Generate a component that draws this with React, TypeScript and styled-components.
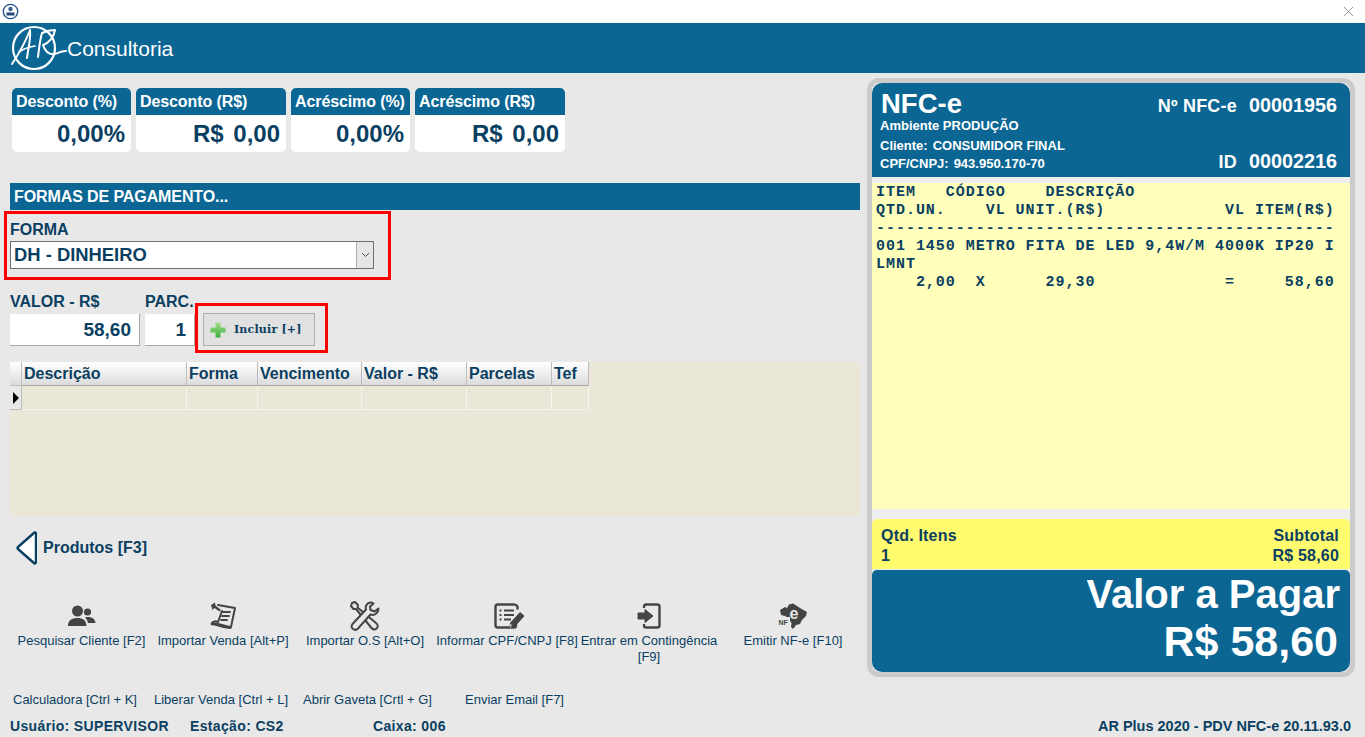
import React from "react";
import styled, { createGlobalStyle } from "styled-components";

const BLUE = "#0b6694";
const NAVY = "#0a3f62";
const ICON = "#444444";

const GlobalStyle = createGlobalStyle`
	html, body {
		margin: 0;
		padding: 0;
		background: #e8e8e8;
	}
	* {
		box-sizing: border-box;
	}
	body {
		font-family: "Liberation Sans", Arial, sans-serif;
		color: ${NAVY};
	}
`;

const Page = styled.div`
	width: 1365px;
	height: 737px;
	overflow: hidden;
	display: flex;
	flex-direction: column;
`;

// barra de titulo
const TitleBar = styled.div`
	height: 23px;
	background: #fff;
	display: flex;
	align-items: center;
	justify-content: space-between;
	padding: 0 11px 0 2px;
`;

const Banner = styled.div`
	height: 50px;
	background: ${BLUE};
	display: flex;
	align-items: center;
	padding: 0 0 0 11px;
`;

const BrandName = styled.span`
	color: #fff;
	font-size: 21px;
	margin: 1px 0 0 -2px;
`;

const Main = styled.div`
	flex: 1;
	display: flex;
	min-height: 0;
`;

const LeftColumn = styled.div`
	width: 867px;
	padding: 15px 7px 0 10px;
	display: flex;
	flex-direction: column;
`;

const Cards = styled.div`
	display: flex;
	gap: 5px;
	padding-left: 2px;
`;

const Card = styled.div<{ $width: number }>`
	width: ${(p) => p.$width}px;
	height: 64px;
	background: #fff;
	border-radius: 5px;
	overflow: hidden;
`;

const CardTitle = styled.div`
	height: 27px;
	background: ${BLUE};
	color: #fff;
	font-size: 16px;
	font-weight: bold;
	line-height: 27px;
	padding-left: 4px;
	letter-spacing: -0.1px;
	white-space: nowrap;
`;

const CardValue = styled.div`
	height: 37px;
	line-height: 38px;
	font-size: 24px;
	font-weight: bold;
	word-spacing: 3px;
	text-align: right;
	padding-right: 6px;
	white-space: nowrap;
`;

const SectionBar = styled.div`
	height: 27px;
	margin-top: 31px;
	background: ${BLUE};
	color: #fff;
	font-size: 16px;
	font-weight: bold;
	line-height: 28px;
	padding-left: 4px;
	letter-spacing: -0.1px;
`;

const Highlight = styled.div`
	border: 3px solid #f00;
`;

const FormaBox = styled(Highlight)`
	width: 387px;
	height: 69px;
	margin: 1px 0 0 -6px;
	padding: 7px 0 0 3px;
`;

const FieldLabel = styled.div`
	font-size: 16px;
	font-weight: bold;
	line-height: 18px;
	white-space: nowrap;
`;

const Select = styled.div`
	width: 364px;
	height: 28px;
	margin-top: 2px;
	background: #fff;
	border: 1px solid #6f6f6f;
	display: flex;
	align-items: center;
	justify-content: space-between;
	font-size: 18.4px;
	font-weight: bold;
	padding-left: 3px;
`;

const SelectArrow = styled.div`
	width: 17px;
	height: 26px;
	background: #e6e6e6;
	border-left: 1px solid #adadad;
	display: flex;
	align-items: center;
	justify-content: center;
`;

const ValuesRow = styled.div`
	display: flex;
	margin-top: 13px;
	height: 70px;
`;

const ValueField = styled.div<{ $width: number }>`
	width: ${(p) => p.$width}px;
	& + & {
		margin-left: 5px;
	}
`;

const ValueInput = styled.div`
	height: 32px;
	margin-top: 3px;
	background: #fff;
	border-right: 1px solid #a8a8a8;
	border-bottom: 1px solid #a8a8a8;
	text-align: right;
	font-size: 19px;
	font-weight: bold;
	line-height: 32px;
	padding-right: 8px;
`;

const IncluirBox = styled(Highlight)`
	width: 133px;
	height: 50px;
	margin-top: 10px;
	padding: 7px 0 0 5px;
`;

const IncluirButton = styled.div`
	width: 112px;
	height: 33px;
	background: #e1e1e1;
	border: 1px solid #adadad;
	display: flex;
	align-items: center;
	padding-left: 6px;
	gap: 8px;
	font-family: "DejaVu Serif", "Liberation Serif", serif;
	font-size: 11px;
	font-weight: bold;
	letter-spacing: 0.2px;
`;

const Grid = styled.div`
	height: 154px;
	margin-top: -1px;
	background: #ebe7d8;
`;

const GridRow = styled.div`
	display: flex;
	height: 24px;
`;

const HeaderCell = styled.div<{ $width: number }>`
	width: ${(p) => p.$width}px;
	background: linear-gradient(#ffffff, #dcdcdc);
	border-right: 1px solid #bdbdbd;
	border-bottom: 1px solid #a9a9a9;
	font-size: 16px;
	font-weight: bold;
	line-height: 23px;
	padding-left: 2px;
	white-space: nowrap;
`;

const BodyCell = styled.div<{ $width: number }>`
	width: ${(p) => p.$width}px;
	border-right: 1px solid #f5f3ea;
	border-bottom: 1px solid #f5f3ea;
`;

const RowMarker = styled.div`
	width: 12px;
	background: #e8e8e8;
	border-right: 1px solid #bdbdbd;
	border-bottom: 1px solid #bdbdbd;
	display: flex;
	align-items: center;
	padding-left: 3px;
`;

const CornerCell = styled(RowMarker)`
	background: linear-gradient(#ffffff, #dcdcdc);
`;

const BackLink = styled.div`
	display: flex;
	align-items: center;
	gap: 6px;
	margin: 15px 0 0 6px;
	height: 34px;
	font-size: 16px;
	font-weight: bold;
`;

const Actions = styled.div`
	display: flex;
	margin-top: 35px;
	height: 70px;
`;

const Action = styled.div<{ $width: number }>`
	flex: none;
	width: ${(p) => p.$width + 10}px;
	margin: 0 -5px;
	display: flex;
	flex-direction: column;
	align-items: center;
	text-align: center;
	font-size: 13px;
	line-height: 16px;
`;

const ActionIcon = styled.div`
	height: 32px;
	margin-bottom: 1px;
	display: flex;
	align-items: center;
	justify-content: center;
`;

const Links = styled.div`
	display: flex;
	height: 16px;
	margin-top: 22px;
	padding-left: 3px;
	font-size: 13px;
	line-height: 16px;
`;

const LinkItem = styled.span<{ $width: number }>`
	width: ${(p) => p.$width}px;
	white-space: nowrap;
`;

const StatusBar = styled.div`
	display: flex;
	margin-top: 10px;
	font-size: 14px;
	font-weight: bold;
	line-height: 16px;
	letter-spacing: 0.35px;
`;

const StatusItem = styled.span<{ $width: number }>`
	width: ${(p) => p.$width}px;
	white-space: nowrap;
`;

const RightColumn = styled.div`
	width: 498px;
	padding: 5px 10px 0 0;
	display: flex;
	flex-direction: column;
`;

const ReceiptFrame = styled.div`
	height: 599px;
	border: 5px solid #cbcbcb;
	border-radius: 12px;
	background: #eeeeee;
	display: flex;
	flex-direction: column;
`;

const ReceiptHeader = styled.div`
	height: 94px;
	background: ${BLUE};
	border-radius: 10px 10px 0 0;
	color: #fff;
	display: flex;
	justify-content: space-between;
	padding: 6px 13px 0 8px;
	font-weight: bold;
`;

const HeaderInfo = styled.div`
	display: flex;
	flex-direction: column;
`;

const NfceTitle = styled.div`
	font-size: 27.5px;
	line-height: 29px;
	padding-left: 1px;
`;

const InfoLine = styled.div<{ $mt: number }>`
	font-size: 13px;
	line-height: 15px;
	margin-top: ${(p) => p.$mt}px;
	white-space: nowrap;
	span {
		margin-left: 5px;
	}
`;

const HeaderNumbers = styled.div`
	display: flex;
	flex-direction: column;
	justify-content: space-between;
	align-items: flex-end;
	padding: 5px 0 3px;
`;

const NumberLine = styled.div`
	font-size: 18px;
	line-height: 23px;
	letter-spacing: 0.2px;
	white-space: nowrap;
	span {
		font-size: 19.8px;
		letter-spacing: 0;
		margin-left: 12px;
	}
`;

const ReceiptPaper = styled.pre`
	height: 326px;
	margin: 6px 0 0;
	background: #ffffbb;
	padding: 1px 0 0 4px;
	font-family: "Liberation Mono", "Courier New", monospace;
	font-size: 15px;
	font-weight: bold;
	letter-spacing: 0.97px;
	line-height: 18px;
	color: ${NAVY};
	overflow: hidden;
`;

const SubtotalBand = styled.div`
	height: 50px;
	margin-top: 10px;
	background: #fffb6e;
	border-radius: 5px 5px 0 0;
	display: flex;
	justify-content: space-between;
	padding: 7px 11px 0 9px;
	font-size: 16px;
	line-height: 20px;
	font-weight: bold;
	letter-spacing: 0.2px;
`;

const SubtotalRight = styled.div`
	text-align: right;
`;

const PayBox = styled.div`
	flex: 1;
	margin-top: 1px;
	background: ${BLUE};
	border-radius: 5px 5px 10px 10px;
	color: #fff;
	font-weight: bold;
	text-align: right;
	padding: 2px 10px 0 0;
`;

const PayLabel = styled.div`
	font-size: 40px;
	line-height: 44px;
`;

const PayValue = styled.div`
	font-size: 43px;
	line-height: 50px;
	padding-right: 2px;
`;

const Version = styled.div`
	margin-top: 41px;
	text-align: right;
	font-size: 14.5px;
	font-weight: bold;
	line-height: 16px;
	padding-right: 4px;
	white-space: nowrap;
`;

const AppIcon = () => (
	<svg width="17" height="17" viewBox="0 0 17 17">
		<circle cx="8.5" cy="8.5" r="7.2" fill="#fff" stroke="#1f4f8a" strokeWidth="1.3" />
		<circle cx="8.5" cy="6" r="2.2" fill="#3a5f95" />
		<path d="M4.5 12.5 V9.5 H12.5 V12.5 Z" fill="#27477a" />
	</svg>
);

const CloseIcon = () => (
	<svg width="11" height="11" viewBox="0 0 11 11">
		<path d="M1 1 L10 10 M10 1 L1 10" stroke="#9a9a9a" strokeWidth="1" />
	</svg>
);

const Logo = () => (
	<svg width="58" height="46" viewBox="0 0 58 46" fill="none" stroke="#fff" strokeLinecap="round" strokeLinejoin="round">
		<circle cx="23" cy="23" r="21" strokeWidth="2.2" />
		<path d="M1 39 C7 30 14 18 19 5 C20 14 17 24 16 33" strokeWidth="2" />
		<path d="M8 27 C12 24 18 22 24 21" strokeWidth="1.6" />
		<path d="M27 32 C28 24 29 14 31 8 C35 6 40 5 44 5 C43 12 38 18 32 20 C34 26 38 30 44 29 C47 28 50 26 55 26" strokeWidth="2" />
	</svg>
);

const SelectChevron = () => (
	<svg width="9" height="6" viewBox="0 0 9 6" fill="none">
		<path d="M1 1 L4.5 4.5 L8 1" stroke="#555" strokeWidth="1" />
	</svg>
);

const PlusIcon = () => (
	<svg width="16" height="16" viewBox="0 0 16 16">
		<defs>
			<linearGradient id="plusFill" x1="0" y1="0" x2="0" y2="1">
				<stop offset="0" stopColor="#9fe08c" />
				<stop offset="1" stopColor="#3fae3a" />
			</linearGradient>
		</defs>
		<path d="M5.5 0.5 H10.5 V5.5 H15.5 V10.5 H10.5 V15.5 H5.5 V10.5 H0.5 V5.5 H5.5 Z" fill="url(#plusFill)" />
	</svg>
);

const MarkerArrow = () => (
	<svg width="6" height="12" viewBox="0 0 6 12">
		<path d="M0 0 L6 6 L0 12 Z" fill="#000" />
	</svg>
);

const BackArrow = () => (
	<svg width="21" height="34" viewBox="0 0 21 34">
		<path d="M18.5 1.5 Q20 1.5 20 3 V31 Q20 32.5 18.5 32.5 L2 18 Q1 17 2 16 Z" fill="#fff" stroke={NAVY} strokeWidth="2.4" strokeLinejoin="round" />
	</svg>
);

const ClientsIcon = () => (
	<svg width="28" height="22" viewBox="0 0 28 22" fill={ICON}>
		<circle cx="9.5" cy="6" r="5.5" />
		<circle cx="19.5" cy="7" r="3.6" />
		<path d="M0 21 C0 15 4 13 9.5 13 C15 13 18 15 18.5 21 Z" />
		<path d="M17 12.5 C22 11 27 13 27.5 18 H20 C19.6 15.5 18.6 14 17 12.5 Z" />
	</svg>
);

const ImportIcon = () => (
	<svg width="28" height="28" viewBox="0 0 28 28" fill="none" stroke={ICON} strokeLinecap="round">
		<path d="M9 3 L26 6 L22 25 C18 26 10 24 3 21 C4 19 7 19 9 20 L13 9" strokeWidth="2" strokeLinejoin="round" />
		<path d="M14 10 H21 M13 14 H20 M12 18 H18" strokeWidth="1.8" />
		<path d="M2 3 L6 0.5 L6.5 3.5 L12 8 L10.5 9.5 L5.5 6 L3.5 8 Z" fill={ICON} stroke="none" />
		<path d="M3 22 C7 21 13 24 21 25.5" strokeWidth="3" />
	</svg>
);

const ToolsIcon = () => (
	<svg width="30" height="30" viewBox="0 0 30 30" fill="none" stroke={ICON} strokeWidth="2" strokeLinejoin="round" strokeLinecap="round">
		<path d="M2 2 L5 1 L8 4 L7.5 6.5 L26 22 C28.5 24 28 26 26.5 27.5 C25 29 23 28.5 21.5 27 L6 8 L3.5 8 L1 5 Z" />
		<path d="M20 1.5 C17 2 15 5 16 8.5 L2.5 23 C1 25 1.5 27 3 28 C4.5 29.2 6.5 29 8 27.5 L20.5 13.5 C24.5 15 28.5 12 28.5 7.5 L24.5 10.5 L20.5 9 L20 5.5 L23.5 2.5 C22.5 1.8 21 1.3 20 1.5 Z" fill="#e8e8e8" />
	</svg>
);

const FormIcon = () => (
	<svg width="35" height="26" viewBox="-4 0 35 26" fill="none" stroke={ICON}>
		<path d="M22 20 V22.5 Q22 24.5 20 24.5 H3.5 Q1.5 24.5 1.5 22.5 V3.5 Q1.5 1.5 3.5 1.5 H20 Q22.5 1.5 23.5 3.5 V6.5" strokeWidth="2.4" />
		<path d="M5.5 7.5 H7.5 M5.5 12 H7.5 M5.5 16.5 H7.5" strokeWidth="2" />
		<path d="M10 7.5 H20 M10 12 H20 M10 16.5 H17" strokeWidth="2" />
		<path d="M16 25 L16.5 20 L26 9.5 L30 13 L20.5 23.5 Z" fill={ICON} strokeWidth="1" strokeLinejoin="round" />
		<path d="M16.6 24.6 L17 21" stroke="#e8e8e8" strokeWidth="1" />
	</svg>
);

const ContingencyIcon = () => (
	<svg width="24" height="26" viewBox="0 0 24 26" fill="none" stroke={ICON}>
		<path d="M7 5 V3.5 Q7 1.5 9 1.5 H20 Q22.5 1.5 22.5 3.5 V22.5 Q22.5 24.5 20 24.5 H9 Q7 24.5 7 22.5 V21" strokeWidth="2.4" />
		<path d="M1 10 H8 V6.5 L16 13 L8 19.5 V16 H1 Z" fill={ICON} stroke={ICON} strokeLinejoin="round" />
	</svg>
);

const BrazilIcon = () => (
	<svg width="30" height="26" viewBox="0 0 30 26">
		<path d="M2 7 L7 4 L9 5 L11 1.5 L15 0.5 L19 3 L22 5 L29 9 L28 13 L24 17 L22 21 L18 22 L15 26 L13 24 L13.5 20 L10 15 L7 13 L3 12 Z" fill={ICON} />
		<text x="16" y="16" fontFamily="Liberation Sans" fontWeight="bold" fontSize="16" fill="#e8e8e8" textAnchor="middle">e</text>
		<rect x="0" y="14" width="12" height="9" fill="#e8e8e8" />
		<text x="0.5" y="22" fontFamily="Liberation Sans" fontWeight="bold" fontSize="7" fill={ICON}>NF</text>
	</svg>
);

const gridColumns = [
	{ label: "Descrição", width: 165 },
	{ label: "Forma", width: 71 },
	{ label: "Vencimento", width: 104 },
	{ label: "Valor - R$", width: 105 },
	{ label: "Parcelas", width: 85 },
	{ label: "Tef", width: 37 },
];

const cards = [
	{ title: "Desconto (%)", value: "0,00%", width: 119 },
	{ title: "Desconto (R$)", value: "R$ 0,00", width: 150 },
	{ title: "Acréscimo (%)", value: "0,00%", width: 119 },
	{ title: "Acréscimo (R$)", value: "R$ 0,00", width: 150 },
];

const actions = [
	{ label: "Pesquisar Cliente [F2]", width: 143, icon: <ClientsIcon /> },
	{ label: "Importar Venda [Alt+P]", width: 140, icon: <ImportIcon /> },
	{ label: "Importar O.S [Alt+O]", width: 144, icon: <ToolsIcon /> },
	{ label: "Informar CPF/CNPJ [F8]", width: 140, icon: <FormIcon /> },
	{ label: "Entrar em Contingência [F9]", width: 144, icon: <ContingencyIcon /> },
	{ label: "Emitir NF-e [F10]", width: 144, icon: <BrazilIcon /> },
];

const receiptText = `ITEM   CÓDIGO    DESCRIÇÃO
QTD.UN.    VL UNIT.(R$)            VL ITEM(R$)
----------------------------------------------
001 1450 METRO FITA DE LED 9,4W/M 4000K IP20 I
LMNT
    2,00  X      29,30             =     58,60`;

const App = () => {
	return (
		<Page>
			<GlobalStyle />
			<TitleBar>
				<AppIcon />
				<CloseIcon />
			</TitleBar>
			<Banner>
				<Logo />
				<BrandName>Consultoria</BrandName>
			</Banner>
			<Main>
				<LeftColumn>
					<Cards>
						{cards.map((card) => (
							<Card key={card.title} $width={card.width}>
								<CardTitle>{card.title}</CardTitle>
								<CardValue>{card.value}</CardValue>
							</Card>
						))}
					</Cards>
					<SectionBar>FORMAS DE PAGAMENTO...</SectionBar>
					<FormaBox>
						<FieldLabel>FORMA</FieldLabel>
						<Select>
							DH - DINHEIRO
							<SelectArrow>
								<SelectChevron />
							</SelectArrow>
						</Select>
					</FormaBox>
					<ValuesRow>
						<ValueField $width={130}>
							<FieldLabel>VALOR - R$</FieldLabel>
							<ValueInput>58,60</ValueInput>
						</ValueField>
						<ValueField $width={50}>
							<FieldLabel>PARC.</FieldLabel>
							<ValueInput>1</ValueInput>
						</ValueField>
						<IncluirBox>
							<IncluirButton>
								<PlusIcon />
								Incluir [+]
							</IncluirButton>
						</IncluirBox>
					</ValuesRow>
					<Grid>
						<GridRow>
							<CornerCell />
							{gridColumns.map((col) => (
								<HeaderCell key={col.label} $width={col.width}>
									{col.label}
								</HeaderCell>
							))}
						</GridRow>
						<GridRow>
							<RowMarker>
								<MarkerArrow />
							</RowMarker>
							{gridColumns.map((col) => (
								<BodyCell key={col.label} $width={col.width} />
							))}
						</GridRow>
					</Grid>
					<BackLink>
						<BackArrow />
						Produtos [F3]
					</BackLink>
					<Actions>
						{actions.map((action) => (
							<Action key={action.label} $width={action.width}>
								<ActionIcon>{action.icon}</ActionIcon>
								{action.label}
							</Action>
						))}
					</Actions>
					<Links>
						<LinkItem $width={141}>Calculadora [Ctrl + K]</LinkItem>
						<LinkItem $width={149}>Liberar Venda [Ctrl + L]</LinkItem>
						<LinkItem $width={162}>Abrir Gaveta [Crtl + G]</LinkItem>
						<LinkItem $width={110}>Enviar Email [F7]</LinkItem>
					</Links>
					<StatusBar>
						<StatusItem $width={180}>Usuário: SUPERVISOR</StatusItem>
						<StatusItem $width={183}>Estação: CS2</StatusItem>
						<StatusItem $width={90}>Caixa: 006</StatusItem>
					</StatusBar>
				</LeftColumn>
				<RightColumn>
					<ReceiptFrame>
						<ReceiptHeader>
							<HeaderInfo>
								<NfceTitle>NFC-e</NfceTitle>
								<InfoLine $mt={0}>Ambiente PRODUÇÃO</InfoLine>
								<InfoLine $mt={5}>
									Cliente:<span>CONSUMIDOR FINAL</span>
								</InfoLine>
								<InfoLine $mt={3}>
									CPF/CNPJ:<span>943.950.170-70</span>
								</InfoLine>
							</HeaderInfo>
							<HeaderNumbers>
								<NumberLine>
									Nº NFC-e<span>00001956</span>
								</NumberLine>
								<NumberLine>
									ID<span>00002216</span>
								</NumberLine>
							</HeaderNumbers>
						</ReceiptHeader>
						<ReceiptPaper>{receiptText}</ReceiptPaper>
						<SubtotalBand>
							<div>
								Qtd. Itens
								<br />1
							</div>
							<SubtotalRight>
								Subtotal
								<br />
								R$ 58,60
							</SubtotalRight>
						</SubtotalBand>
						<PayBox>
							<PayLabel>Valor a Pagar</PayLabel>
							<PayValue>R$ 58,60</PayValue>
						</PayBox>
					</ReceiptFrame>
					<Version>AR Plus 2020 - PDV NFC-e 20.11.93.0</Version>
				</RightColumn>
			</Main>
		</Page>
	);
};

export default App;
